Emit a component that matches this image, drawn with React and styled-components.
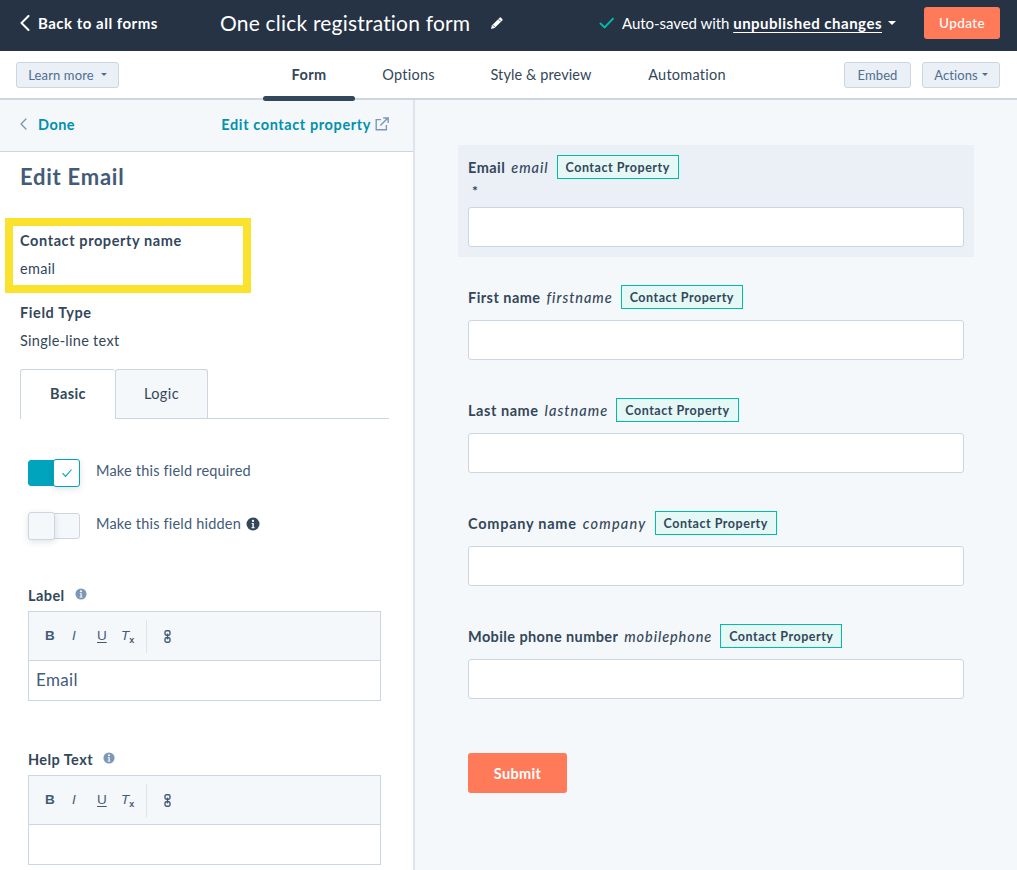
import React from "react";
import styled, { createGlobalStyle } from "styled-components";

const Global = createGlobalStyle`
  html, body { margin: 0; padding: 0; background: #f5f8fa; }
  body { font-family: "Lato", "Noto Sans", sans-serif; color: #33475b; -webkit-font-smoothing: antialiased; }
  * { box-sizing: border-box; }
`;

const Page = styled.div`
  width: 1017px; height: 870px; overflow: hidden; display: flex; flex-direction: column;
`;
const Header = styled.header`
  height: 51px; flex: none; background: #253345; color: #fff; display: flex; align-items: center; padding: 0 17px 5px 20px;
`;
const BackLink = styled.div`
  display: flex; align-items: center; gap: 8px; width: 200px; font-size: 15px; font-weight: 700; letter-spacing: .5px;
`;
const FormTitle = styled.div`
  display: flex; align-items: center; gap: 20px; font-size: 21px; letter-spacing: .2px; line-height: 28px;
`;
const SaveStatus = styled.div`
  margin-left: auto; display: flex; align-items: center; font-size: 15px; letter-spacing: -.05px;
  b { font-weight: 700; text-decoration: underline; text-underline-offset: 3px; letter-spacing: .5px; }
  svg { margin-right: 7px; }
  span + span { margin-left: 6px; }
`;
const Caret = styled.span`
  display: inline-block; width: 0; height: 0; border-left: ${p => p.$s || 4}px solid transparent; border-right: ${p => p.$s || 4}px solid transparent;
  border-top: ${p => p.$s || 4}px solid currentColor; margin-left: ${p => p.$gap || 0}px;
`;
const UpdateButton = styled.button`
  width: 76px; height: 32px; margin-left: 28px; border: 0; border-radius: 3px; background: #ff7a59; color: #fff;
  font: 500 13.5px "Lato", sans-serif; letter-spacing: .4px;
`;
const Nav = styled.nav`
  height: 49px; flex: none; background: #fff; border-bottom: 2px solid #cbd6e2; display: flex; align-items: center;
  padding: 0 17px 0 16px; position: relative;
`;
const SmallButton = styled.button`
  height: 26px; width: ${p => p.$w}px; padding: 0; border: 1px solid #cbd6e2; border-radius: 3px; background: #eaf0f6; color: #506e91;
  font: 400 13px "Lato", sans-serif; letter-spacing: .12px; display: flex; align-items: center; justify-content: center; margin-left: ${p => p.$ml || 0}px;
`;
const Tabs = styled.div`
  display: flex; margin-left: 144px; margin-right: auto; height: 100%;
`;
const NavTab = styled.div`
  width: ${p => p.$w}px; display: flex; align-items: center; justify-content: center; font-size: 14.5px; position: relative;
  letter-spacing: ${p => p.$ls ?? .25}px; font-weight: ${p => p.$active ? 700 : 400};
  ${p => p.$active && `
    &::after { content: ""; position: absolute; left: 0; right: 0; bottom: -3px; height: 5px; background: #33475b; border-radius: 3px; }
  `}
`;
const Body = styled.div`
  flex: 1; display: flex; min-height: 0;
`;
const Side = styled.aside`
  width: 415px; flex: none; background: #fff; border-right: 2px solid #dfe3eb; overflow: hidden;
`;
const SideHeader = styled.div`
  height: 52px; background: #f5f8fa; border-bottom: 1px solid #cbd6e2; display: flex; align-items: center; justify-content: space-between; padding: 0 24px 3px 20px;
`;
const LinkText = styled.span`
  display: flex; align-items: center; gap: ${p => p.$gap || 4}px; color: #0091ae; font-size: 14.5px; font-weight: 700; letter-spacing: ${p => p.$ls ?? .6}px;
`;
const SideBody = styled.div`
  padding: 13px 24px 0 20px;
`;
const Heading = styled.h2`
  margin: 0 0 29px; font-size: 22px; line-height: 24px; font-weight: 700; color: #425b76; letter-spacing: .75px;
`;
const Highlight = styled.div`
  width: 246px; height: 75px; margin-left: -15px; padding: 5px 0 0 7px; border: 8px solid #fae22d; background: #fff;
`;
const FieldTitle = styled.div`
  font-size: 14.5px; line-height: 20px; font-weight: 700; letter-spacing: .6px;
`;
const FieldValue = styled.div`
  font-size: 14.5px; line-height: 20px; margin-top: 8px; letter-spacing: .28px;
`;
const FieldBlock = styled.div`
  margin-top: 10px;
`;
const PanelTabs = styled.div`
  margin-top: 18px; height: 50px; display: flex; border-bottom: 1px solid #cbd6e2;
`;
const PanelTab = styled.div`
  width: ${p => p.$w}px; height: ${p => p.$active ? 50 : 49}px; display: flex; align-items: center; justify-content: center; padding-bottom: 2px;
  font-size: 14.5px; letter-spacing: .4px; font-weight: ${p => p.$active ? 700 : 400};
  border: 1px solid #cbd6e2; border-bottom: 0; border-radius: 3px 3px 0 0;
  background: ${p => p.$active ? "#fff" : "#f5f8fa"};
  ${p => p.$active ? "border-right: 0;" : ""}
`;
const Settings = styled.div`
  padding: 40px 8px 0 8px;
`;
const ToggleRow = styled.div`
  display: flex; align-items: center; gap: 16px; height: 27px; margin-bottom: 26px; font-size: 14.5px; letter-spacing: .2px; color: #425b76;
`;
const ToggleText = styled.span`
  display: flex; align-items: center; gap: 5px; padding-bottom: 4px;
`;
const Toggle = styled.div`
  width: 52px; height: 26px; flex: none; position: relative; border-radius: 3px;
  background: ${p => p.$on ? "#00a4bd" : "#f5f8fa"}; border: 1px solid ${p => p.$on ? "#00a4bd" : "#cbd6e2"};
`;
const Knob = styled.div`
  position: absolute; top: -2px; ${p => p.$on ? "right: -1px;" : "left: -1px;"} width: 27px; height: 28px; border-radius: 3px;
  background: ${p => p.$on ? "#fff" : "#f5f8fa"}; border: 1px solid ${p => p.$on ? "#00a4bd" : "#cbd6e2"};
  box-shadow: 0 2px 6px rgba(45, 62, 80, .15); display: flex; align-items: center; justify-content: center;
`;
const EditorLabel = styled.div`
  display: flex; align-items: center; gap: 10px; height: 20px; font-size: 14.5px; font-weight: 700; letter-spacing: .42px;
  margin: ${p => p.$top}px 0 6px; svg { margin-top: -3px; }
`;
const Editor = styled.div`
  width: 353px; height: 90px; border: 1px solid #cbd6e2; background: #fff;
`;
const Toolbar = styled.div`
  height: 49px; background: #f5f8fa; border-bottom: 1px solid #cbd6e2; display: flex; align-items: center; padding: 0 0 0 15px; color: #425b76;
`;
const ToolGlyph = styled.span`
  width: ${p => p.$w || 26}px; font-family: "Liberation Sans", sans-serif; font-size: 13.5px; text-align: left; padding-left: 1px; line-height: 1;
  font-weight: ${p => p.$b ? 700 : 400}; font-style: ${p => p.$i ? "italic" : "normal"};
  text-decoration: ${p => p.$u ? "underline" : "none"}; text-underline-offset: 2px;
  sub { font-size: 9px; font-style: normal; font-weight: 700; vertical-align: -3px; line-height: 0; }
`;
const ToolSep = styled.span`
  width: 1px; height: 33px; background: #dfe3eb; margin: 0 17px 0 0;
`;
const EditorText = styled.div`
  padding: 8px 7px; font-size: 17px; line-height: 22px; letter-spacing: .35px; color: #425b76;
`;
const Canvas = styled.main`
  flex: 1; background: #f5f8fa; padding: 45px 43px 0 43px;
`;
const FieldCard = styled.div`
  padding: ${p => p.$selected ? "10px 10px" : "0 10px"}; background: ${p => p.$selected ? "#eaf0f6" : "transparent"};
  margin-top: ${p => p.$mt || 0}px;
`;
const LabelRow = styled.div`
  display: flex; align-items: center; height: 24px; font-size: 14.5px; font-weight: 700; letter-spacing: ${p => p.$ls ?? .45}px;
  em { font-weight: 500; margin-left: 6px; letter-spacing: ${p => (p.$ls ?? .45) + .5}px; }
`;
const Badge = styled.span`
  height: 24px; margin-left: 8px; padding: 0 8px; display: flex; align-items: center; border: 1px solid #00bda5; background: #e5f8f6;
  font-size: 12.5px; font-weight: 700; letter-spacing: .52px; color: #33475b;
`;
const Required = styled.div`
  height: 18px; padding: 4px 0 0 4px; font-size: 14px; line-height: 16px; font-weight: 700;
`;
const Input = styled.div`
  width: 496px; height: 40px; margin-top: ${p => p.$mt}px; background: #fff; border: 1px solid #cbd6e2; border-radius: 3px;
`;
const Submit = styled.button`
  width: 99px; height: 40px; margin: 54px 0 0 10px; border: 0; border-radius: 3px; background: #ff7a59; color: #fff;
  font: 700 14.5px "Lato", sans-serif; letter-spacing: .35px;
`;

const Info = ({ size = 14, color = "#33475b" }) => (
  <svg width={size} height={size} viewBox="0 0 14 14" aria-hidden="true">
    <circle cx="7" cy="7" r="6.5" fill={color} />
    <circle cx="7" cy="3.9" r="1.15" fill="#fff" />
    <path d="M5.6 6h2.2v4.2h.9v1H5.4v-1h1V7h-.8z" fill="#fff" />
  </svg>
);

const Chevron = ({ w = 10, h = 16, stroke = "#fff", sw = 2 }) => (
  <svg width={w} height={h} viewBox="0 0 10 16" fill="none" aria-hidden="true">
    <path d="M8.5 1 1.5 8l7 7" stroke={stroke} strokeWidth={sw} strokeLinecap="round" strokeLinejoin="round" />
  </svg>
);

const Pencil = () => (
  <svg width="14" height="14" viewBox="0 0 14 14" aria-hidden="true">
    <path d="M1 13l.9-3.6L9.6 1.7a1 1 0 0 1 1.4 0l1.3 1.3a1 1 0 0 1 0 1.4L4.6 12.1z" fill="#fff" />
    <path d="M3 9.3l1.8 1.8M8.6 3.2l2.2 2.2" stroke="#253345" strokeWidth=".8" />
  </svg>
);

const External = () => (
  <svg width="14" height="14" viewBox="0 0 14 14" fill="none" stroke="#7c98b6" strokeWidth="1.4" aria-hidden="true">
    <path d="M6 2.6H1.2v10.2h10.2V8" />
    <path d="M5.4 8.6 12.4 1.6M8.2 1h5v5" />
  </svg>
);

const Check = () => (
  <svg width="16" height="12" viewBox="0 0 16 12" fill="none" aria-hidden="true">
    <path d="M1.5 6.5 5.6 10.4 14 1.6" stroke="#00bda5" strokeWidth="2" strokeLinecap="round" strokeLinejoin="round" />
  </svg>
);

const ChainLink = () => (
  <svg width="7" height="13" viewBox="0 0 7 13" fill="none" stroke="#425b76" strokeWidth="1.4" aria-hidden="true">
    <rect x="1" y=".8" width="5" height="4.4" rx="1.4" />
    <rect x="1" y="7.8" width="5" height="4.4" rx="1.4" />
    <path d="M3.5 3.6v5.8" />
  </svg>
);

const EditorToolbar = () => (
  <Toolbar>
    <ToolGlyph $b $w={27}>B</ToolGlyph>
    <ToolGlyph $i $w={25}>I</ToolGlyph>
    <ToolGlyph $u $w={24}>U</ToolGlyph>
    <ToolGlyph $i $w={26}>T<sub>x</sub></ToolGlyph>
    <ToolSep />
    <ChainLink />
  </Toolbar>
);

const fields = [
  { label: "First name", name: "firstname" },
  { label: "Last name", name: "lastname", ls: .55 },
  { label: "Company name", name: "company", ls: .75 },
  { label: "Mobile phone number", name: "mobilephone", ls: .4 },
];

export default function App() {
  return (
    <Page>
      <Global />
      <Header>
        <BackLink><Chevron />Back to all forms</BackLink>
        <FormTitle>One click registration form <Pencil /></FormTitle>
        <SaveStatus>
          <Check />
          <span>Auto-saved with <b>unpublished changes</b></span>
          <Caret />
        </SaveStatus>
        <UpdateButton>Update</UpdateButton>
      </Header>
      <Nav>
        <SmallButton $w={103}>Learn more<Caret $s={3.5} $gap={7} /></SmallButton>
        <Tabs>
          <NavTab $w={92} $active $ls={.4}>Form</NavTab>
          <NavTab $w={107}>Options</NavTab>
          <NavTab $w={158} $ls={.1}>Style &amp; preview</NavTab>
          <NavTab $w={134}>Automation</NavTab>
        </Tabs>
        <SmallButton $w={67}>Embed</SmallButton>
        <SmallButton $w={78} $ml={11}>Actions<Caret $s={3.5} $gap={4} /></SmallButton>
      </Nav>
      <Body>
        <Side>
          <SideHeader>
            <LinkText $gap={11} $ls={.45}><Chevron w={7} h={12} stroke="#7c98b6" sw={2} />Done</LinkText>
            <LinkText $ls={.6}>Edit contact property <External /></LinkText>
          </SideHeader>
          <SideBody>
            <Heading>Edit Email</Heading>
            <Highlight>
              <FieldTitle>Contact property name</FieldTitle>
              <FieldValue>email</FieldValue>
            </Highlight>
            <FieldBlock>
              <FieldTitle>Field Type</FieldTitle>
              <FieldValue>Single-line text</FieldValue>
            </FieldBlock>
            <PanelTabs>
              <PanelTab $w={95} $active>Basic</PanelTab>
              <PanelTab $w={93}>Logic</PanelTab>
            </PanelTabs>
            <Settings>
              <ToggleRow>
                <Toggle $on>
                  <Knob $on>
                    <svg width="12" height="10" viewBox="0 0 12 10" fill="none" aria-hidden="true">
                      <path d="M1.5 5.2 4.6 8.4 10.5 1.5" stroke="#00a4bd" strokeWidth="1.1" />
                    </svg>
                  </Knob>
                </Toggle>
                <ToggleText>Make this field required</ToggleText>
              </ToggleRow>
              <ToggleRow>
                <Toggle><Knob /></Toggle>
                <ToggleText>Make this field hidden <Info /></ToggleText>
              </ToggleRow>
              <EditorLabel $top={46}>Label <Info size={12} color="#7c98b6" /></EditorLabel>
              <Editor>
                <EditorToolbar />
                <EditorText>Email</EditorText>
              </Editor>
              <EditorLabel $top={48}>Help Text <Info size={12} color="#7c98b6" /></EditorLabel>
              <Editor>
                <EditorToolbar />
              </Editor>
            </Settings>
          </SideBody>
        </Side>
        <Canvas>
          <FieldCard $selected>
            <LabelRow>Email <em>email</em><Badge>Contact Property</Badge></LabelRow>
            <Required>*</Required>
            <Input $mt={10} />
          </FieldCard>
          {fields.map((f, i) => (
            <FieldCard key={f.name} $mt={i === 0 ? 28 : 38}>
              <LabelRow $ls={f.ls}>{f.label} <em>{f.name}</em><Badge>Contact Property</Badge></LabelRow>
              <Input $mt={11} />
            </FieldCard>
          ))}
          <Submit>Submit</Submit>
        </Canvas>
      </Body>
    </Page>
  );
}
